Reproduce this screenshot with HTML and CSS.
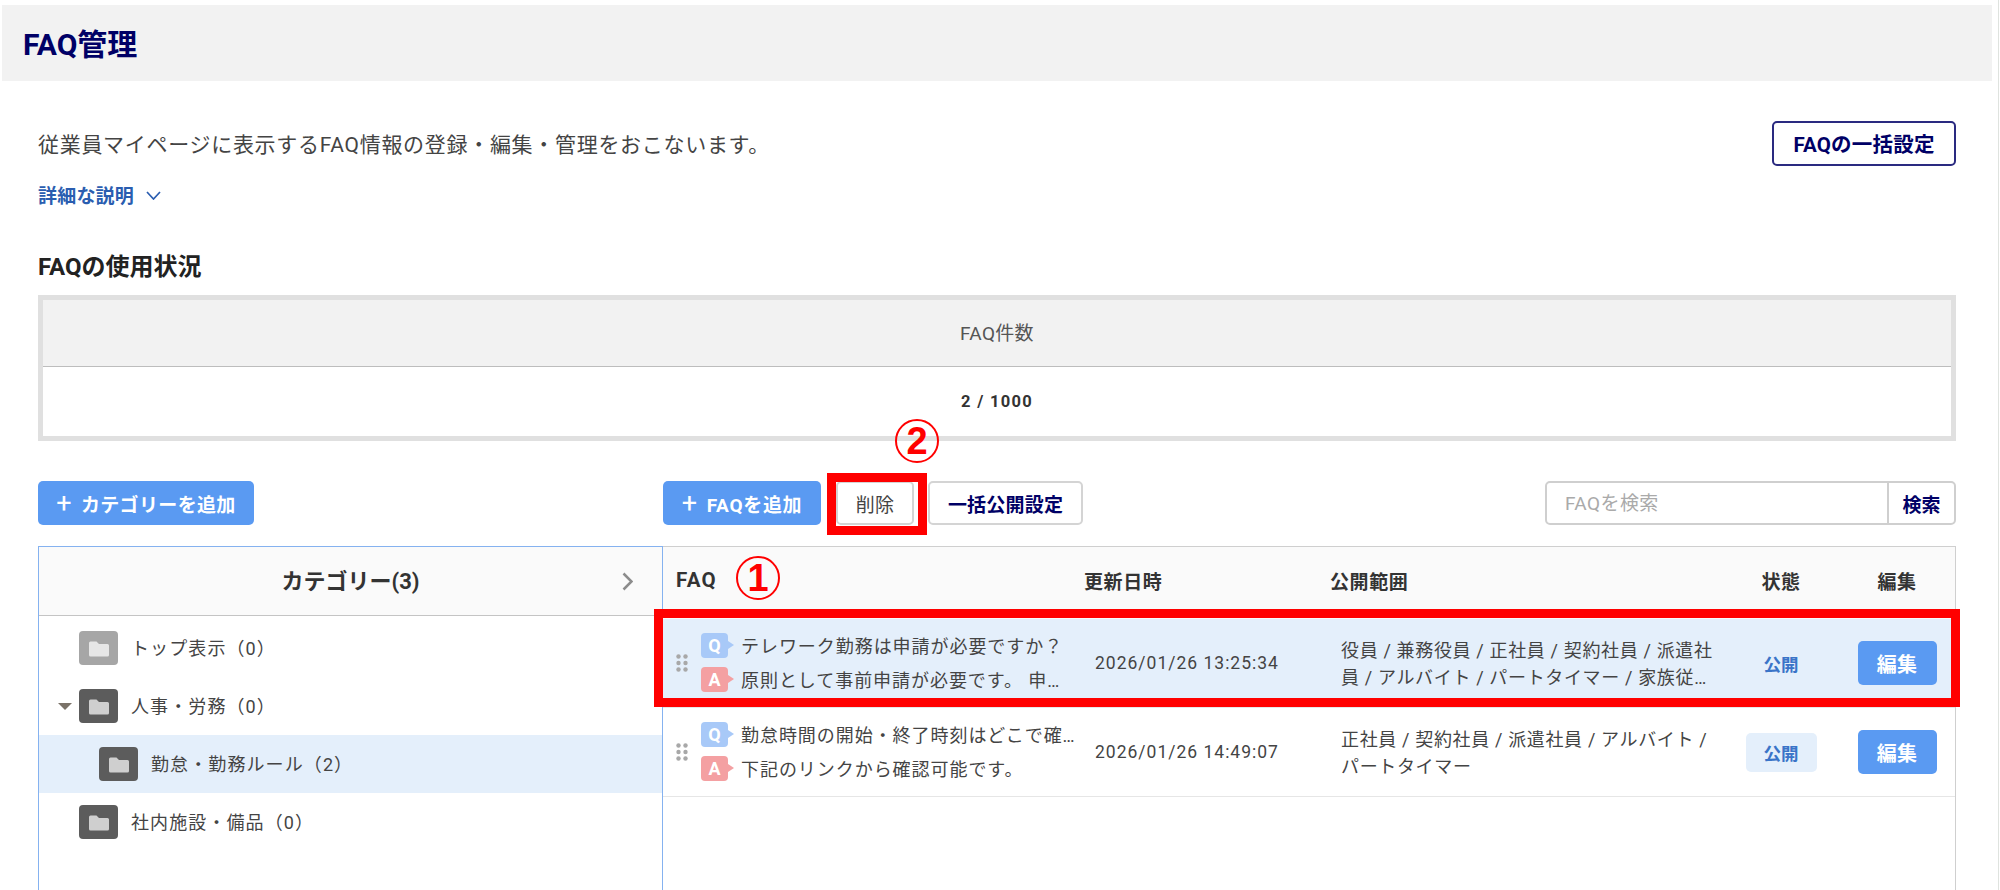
FILE: index.html
```html
<!DOCTYPE html>
<html lang="ja">
<head>
<meta charset="utf-8">
<title>FAQ管理</title>
<link rel="stylesheet" href="styles.css">
</head>
<body>
<svg class="defs" width="0" height="0" aria-hidden="true">
  <symbol id="folder" viewBox="0 0 39 34">
    <path class="folder-shape" d="M10 12a1.500 1.500 0 0 1 1.500-1.500h6l2.500 2.500h8.500a1.500 1.500 0 0 1 1.500 1.500v9.500a1.500 1.500 0 0 1-1.500 1.500h-17a1.500 1.500 0 0 1-1.500-1.500z"/>
  </symbol>
  <symbol id="grip" viewBox="0 0 12 18">
    <circle cx="2.500" cy="2.500" r="2.200"/><circle cx="9.500" cy="2.500" r="2.200"/>
    <circle cx="2.500" cy="9" r="2.200"/><circle cx="9.500" cy="9" r="2.200"/>
    <circle cx="2.500" cy="15.500" r="2.200"/><circle cx="9.500" cy="15.500" r="2.200"/>
  </symbol>
</svg>
<div class="page">
  <header class="title-bar"><h1>FAQ管理</h1></header>
  <main class="content">
    <div class="intro">
      <p class="lead">従業員マイページに表示するFAQ情報の登録・編集・管理をおこないます。</p>
      <button class="btn btn-outline">FAQの一括設定</button>
    </div>
    <a class="detail-link">詳細な説明
      <svg class="detail-chevron" viewBox="0 0 15 9"><path d="M1 1l6.500 7L14 1"/></svg>
    </a>
    <h2 class="section-title">FAQの使用状況</h2>
    <div class="usage">
      <div class="usage-head">FAQ件数</div>
      <div class="usage-value">2 / 1000</div>
    </div>

    <div class="toolbar">
      <div class="toolbar-left">
        <button class="btn btn-primary btn-cat"><span class="plus">+</span>カテゴリーを追加</button>
      </div>
      <div class="toolbar-right">
        <button class="btn btn-primary btn-add"><span class="plus">+</span>FAQを追加</button>
        <button class="btn btn-plain btn-del">削除</button>
        <button class="btn btn-plain btn-bulk">一括公開設定</button>
        <div class="search">
          <span class="search-input">FAQを検索</span>
          <span class="search-btn">検索</span>
        </div>
      </div>
    </div>

    <div class="panels">
      <aside class="cats">
        <div class="cats-head">
          <span>カテゴリー(3)</span>
          <svg class="cats-chevron" viewBox="0 0 11 19"><path d="M1.500 1.500l8 8-8 8"/></svg>
        </div>
        <ul class="tree">
          <li class="tree-row lvl-0"><span class="folder folder-light"><svg><use href="#folder"/></svg></span><span class="tree-label">トップ表示（0）</span></li>
          <li class="tree-row lvl-0b"><span class="caret"></span><span class="folder"><svg><use href="#folder"/></svg></span><span class="tree-label">人事・労務（0）</span></li>
          <li class="tree-row lvl-1 is-selected"><span class="folder"><svg><use href="#folder"/></svg></span><span class="tree-label">勤怠・勤務ルール（2）</span></li>
          <li class="tree-row lvl-0"><span class="folder"><svg><use href="#folder"/></svg></span><span class="tree-label">社内施設・備品（0）</span></li>
        </ul>
      </aside>

      <section class="faq">
        <div class="faq-head">
          <div class="th th-faq">FAQ</div>
          <div class="th">更新日時</div>
          <div class="th">公開範囲</div>
          <div class="th th-center">状態</div>
          <div class="th th-center">編集</div>
        </div>

        <div class="faq-row is-selected">
          <div class="cell-faq">
            <svg class="grip"><use href="#grip"/></svg>
            <div class="qa">
              <div class="qa-line"><span class="badge badge-q">Q</span><span class="qa-text">テレワーク勤務は申請が必要ですか？</span></div>
              <div class="qa-line"><span class="badge badge-a">A</span><span class="qa-text">原則として事前申請が必要です。 申請方法については</span></div>
            </div>
          </div>
          <div class="cell-date">2026/01/26 13:25:34</div>
          <div class="cell-scope"><span>役員 / 兼務役員 / 正社員 / 契約社員 / 派遣社員 / アルバイト / パートタイマー / 家族従業員 / その他</span></div>
          <div class="cell-status"><span class="status">公開</span></div>
          <div class="cell-edit"><button class="btn btn-primary btn-edit">編集</button></div>
        </div>

        <div class="faq-row">
          <div class="cell-faq">
            <svg class="grip"><use href="#grip"/></svg>
            <div class="qa">
              <div class="qa-line"><span class="badge badge-q">Q</span><span class="qa-text">勤怠時間の開始・終了時刻はどこで確認できますか？</span></div>
              <div class="qa-line"><span class="badge badge-a">A</span><span class="qa-text">下記のリンクから確認可能です。</span></div>
            </div>
          </div>
          <div class="cell-date">2026/01/26 14:49:07</div>
          <div class="cell-scope"><span>正社員 / 契約社員 / 派遣社員 / アルバイト / パートタイマー</span></div>
          <div class="cell-status"><span class="status">公開</span></div>
          <div class="cell-edit"><button class="btn btn-primary btn-edit">編集</button></div>
        </div>
      </section>
    </div>
  </main>

  <div class="mark mark-del"></div>
  <div class="mark mark-row"></div>
  <div class="num num-1">1</div>
  <div class="num num-2">2</div>
</div>
</body>
</html>
```
FILE: styles.css
```css
* { box-sizing: border-box; }
html, body { margin: 0; padding: 0; background: #fff; }
body {
  font-family: Roboto, "Noto Sans CJK JP", sans-serif;
  color: #444;
  font-size: 18px;
  overflow: hidden;
}
.defs { position: absolute; }
.page {
  position: relative;
  width: 1999px;
  height: 890px;
  overflow: hidden;
  border-right: 1px solid #dfe3df;
  padding-top: 5px;
}

/* title */
.title-bar {
  margin: 0 6px 0 2px;
  height: 76px;
  background: #f2f2f2;
  display: flex;
  align-items: center;
  padding: 0 0 3px 21px;
}
.title-bar h1 {
  margin: 0;
  font-size: 30px;
  font-weight: 700;
  color: #000066;
}

.content { padding: 40px 42px 0 38px; }

.intro { display: flex; justify-content: space-between; align-items: center; height: 45px; }
.lead { margin: 0 0 2px; font-size: 21px; letter-spacing: .7px; color: #444; }

.btn {
  font-family: inherit;
  font-weight: 700;
  font-size: 19px;
  border-radius: 5px;
  height: 44px;
  padding: 0;
  cursor: pointer;
  display: inline-flex;
  align-items: center;
  justify-content: center;
  letter-spacing: .2px;
}
.btn-outline { width: 184px; height: 45px; padding-bottom: 2px; background: #fff; border: 2px solid #2a2a80; color: #000066; font-size: 20.500px; }
.btn-primary { background: #5a9af2; border: 0; color: #fff; }
.btn-plain { background: #fff; border: 2px solid #d4d4d4; color: #000066; }
.plus { font-size: 27px; font-weight: 400; line-height: 1; margin-right: 9px; }

.detail-link {
  display: flex;
  align-items: center;
  margin-top: 16px;
  height: 24px;
  color: #2a5db0;
  font-weight: 700;
  font-size: 19px;
  letter-spacing: .2px;
}
.detail-chevron { width: 15px; height: 9px; margin-left: 12px; margin-top: 2px; fill: none; stroke: #2a5db0; stroke-width: 1.700; }

.section-title { margin: 47px 0 14px; height: 28px; line-height: 28px; font-size: 24px; font-weight: 700; color: #222; }

.usage { border: 5px solid #e0e0e0; width: 1918px; }
.usage-head {
  height: 67px;
  padding-bottom: 4px;
  background: #f2f2f2;
  border-bottom: 1px solid #bdbdbd;
  display: flex; align-items: center; justify-content: center;
  font-size: 19px;
  color: #555;
  letter-spacing: .3px;
}
.usage-value {
  height: 69px;
  display: flex; align-items: center; justify-content: center;
  font-weight: 700;
  font-size: 16.500px;
  color: #333;
  letter-spacing: 1.300px;
}

/* toolbar */
.toolbar { display: flex; margin-top: 40px; height: 44px; width: 1918px; }
.toolbar-left { width: 625px; }
.toolbar-right { flex: 1; display: flex; align-items: center; }
.btn-cat { width: 216px; letter-spacing: .35px; }
.btn-add { width: 158px; letter-spacing: .7px; }
.btn-del { width: 78px; margin-left: 15px; font-weight: 400; color: #444; }
.btn-bulk { width: 155px; margin-left: 14px; }

.search {
  margin-left: auto;
  width: 411px;
  height: 44px;
  border: 2px solid #cfcfcf;
  border-radius: 5px;
  display: flex;
  align-items: center;
}
.search-input { flex: 1; padding: 0 0 3px 18px; color: #aaa; font-size: 19px; letter-spacing: .4px; }
.search-btn {
  width: 67px;
  height: 100%;
  border-left: 2px solid #cfcfcf;
  display: flex; align-items: center; justify-content: center;
  color: #000066;
  font-weight: 700;
  font-size: 19px;
}

/* panels */
.panels { display: flex; margin-top: 21px; width: 1918px; height: 360px; }
.cats {
  width: 625px;
  border: 1px solid #85b2f0;
  border-bottom: 0;
  flex: none;
}
.cats-head {
  position: relative;
  height: 69px;
  padding-bottom: 5px;
  background: #fafafa;
  border-bottom: 1px solid #c4c4c4;
  display: flex; align-items: center; justify-content: center;
  font-size: 22px;
  font-weight: 700;
  color: #333;
}
.cats-chevron {
  position: absolute;
  right: 29px; top: 25px;
  width: 11px; height: 19px;
  fill: none; stroke: #8c8c8c; stroke-width: 2.500;
}
.tree { list-style: none; margin: 3px 0 0; padding: 0; }
.tree-row {
  height: 58px;
  display: flex;
  align-items: center;
  color: #444;
  letter-spacing: 1.100px;
}
.tree-label { margin-left: -1px; padding-bottom: 2px; }
.lvl-0 { padding-left: 40px; }
.lvl-0b { padding-left: 19px; }
.lvl-1 { padding-left: 60px; }
.tree-row.is-selected { background: #e4effb; }
.folder {
  width: 39px; height: 34px;
  border-radius: 4px;
  background: #5c5c5c;
  margin-right: 14px;
  flex: none;
}
.folder svg { display: block; width: 39px; height: 34px; fill: #cfcfcf; }
.folder-light { background: #a6a6a6; }
.folder-light svg { fill: #e6e6e6; }
.caret {
  width: 0; height: 0;
  border-left: 7px solid transparent;
  border-right: 7px solid transparent;
  border-top: 7px solid #7a7268;
  margin-right: 7px;
}

/* faq list */
.faq { flex: 1; border-top: 1px solid #cfcfcf; border-right: 1px solid #cfcfcf; }
.faq-head, .faq-row {
  display: grid;
  grid-template-columns: 421px 246px 392px 118px 114px;
  align-items: center;
}
.faq-head { height: 72px; padding-bottom: 6px; background: #fafafa; }
.th { font-size: 19px; font-weight: 700; color: #333; letter-spacing: .6px; }
.th-faq { margin-left: 13px; justify-self: start; font-size: 20.500px; letter-spacing: 1.300px; }
.th-center { text-align: center; }
.faq-row { height: 89px; border-bottom: 1px solid #e6e6e6; }
.faq-row.is-selected { background: #e4effb; }
.cell-faq { display: flex; align-items: center; padding-left: 13px; min-width: 0; }
.grip { width: 12px; height: 18px; fill: #a8a8a8; flex: none; margin-right: 13px; }
.qa { flex: 1; min-width: 0; padding: 0 6px 2px 0; display: flex; flex-direction: column; gap: 8px; }
.qa-line { display: flex; align-items: center; height: 26px; min-width: 0; }
.badge {
  position: relative;
  flex: none;
  width: 27px; height: 25px;
  border-radius: 4px;
  color: #fff;
  font-weight: 700;
  font-size: 18px;
  display: flex; align-items: center; justify-content: center;
  margin-right: 13px;
}
.badge::after {
  content: "";
  position: absolute;
  left: 100%; top: 8px;
  border-left: 6px solid;
  border-top: 4px solid transparent;
  border-bottom: 4px solid transparent;
}
.badge-q { background: #a8c9f8; }
.badge-q::after { border-left-color: #a8c9f8; }
.badge-a { background: #f4a0a2; }
.badge-a::after { border-left-color: #f4a0a2; }
.qa-text {
  flex: 1; min-width: 0;
  white-space: nowrap; overflow: hidden; text-overflow: ellipsis;
  letter-spacing: .95px;
  color: #444;
}
.cell-date { padding-left: 11px; font-size: 17.500px; letter-spacing: 1px; color: #444; }
.cell-scope { padding: 2px 8px 0 11px; line-height: 27px; letter-spacing: .65px; color: #444; }
.cell-scope span {
  display: -webkit-box;
  -webkit-box-orient: vertical;
  -webkit-line-clamp: 2;
  overflow: hidden;
}
.cell-status { display: flex; justify-content: center; }
.status {
  width: 71px; height: 39px;
  border-radius: 5px;
  background: #e4effb;
  color: #3a74c8;
  font-weight: 700;
  font-size: 17.500px;
  display: flex; align-items: center; justify-content: center;
}
.cell-edit { display: flex; justify-content: center; }
.btn-edit { width: 79px; font-size: 20px; }

/* red annotations laid over the page */
.mark { position: absolute; border: 9px solid #ff0000; pointer-events: none; }
.mark-del { left: 827px; top: 473px; width: 100px; height: 62px; }
.mark-row { left: 654px; top: 609px; width: 1306px; height: 98px; }
.num {
  position: absolute;
  width: 44px; height: 44px;
  border: 2px solid #ff0000;
  border-radius: 50%;
  color: #ff0000;
  font-family: "Liberation Sans", sans-serif;
  font-weight: 700;
  font-size: 38px;
  line-height: 40px;
  text-align: center;
}
.num-1 { left: 736px; top: 556px; }
.num-2 { left: 895px; top: 419px; }
```
